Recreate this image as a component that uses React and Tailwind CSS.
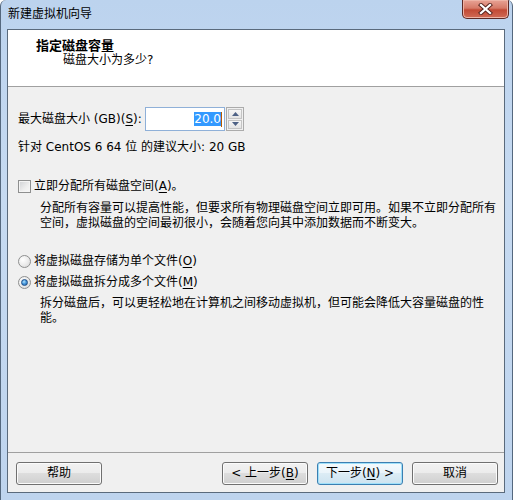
import React from "react";

function U({ children }) {
  return <span className="underline underline-offset-[2px] decoration-[1px]">{children}</span>;
}

function Btn({ children, def }) {
  return (
    <div
      className={
        def
          ? "w-[86px] h-[23px] rounded-[3px] border border-[#3c7fb1] shadow-[inset_0_0_0_1px_#9fe0fa] bg-[linear-gradient(to_bottom,#f4fafd_0%,#eaf4fa_50%,#dcecf5_50%,#cde3f0_100%)] flex items-center justify-center text-[12px] leading-[15px] text-black"
          : "w-[86px] h-[23px] rounded-[3px] border border-[#707070] shadow-[inset_0_0_0_1px_#fbfbfb] bg-[linear-gradient(to_bottom,#f2f2f2_0%,#ebebeb_50%,#dddddd_50%,#cfcfcf_100%)] flex items-center justify-center text-[12px] leading-[15px] text-black"
      }
    >
      {children}
    </div>
  );
}

function SpinBtn({ up }) {
  return (
    <div className="flex-1 border border-[#c4c4c4] bg-[linear-gradient(to_bottom,#f6f6f6,#e4e4e4)] flex items-center justify-center">
      <svg width="7" height="4" viewBox="0 0 7 4">
        {up ? <path d="M0 4 L3.5 0 L7 4 Z" fill="#4d6185" /> : <path d="M0 0 L3.5 4 L7 0 Z" fill="#4d6185" />}
      </svg>
    </div>
  );
}

export default function App() {
  return (
    <div className="w-[513px] h-[500px] overflow-hidden bg-[linear-gradient(to_bottom,#bcd3ee_0%,#c6daf1_40%,#bed4ee_100%)] border-l border-r border-[#55687e] rounded-t-[6px] flex flex-col font-['DejaVu_Sans','Noto_Sans_CJK_SC',sans-serif] text-black">
      <div className="h-[29px] flex items-start justify-between shrink-0">
        <div className="pl-[7px] h-[29px] flex items-center text-[12px] leading-[15px] text-black">新建虚拟机向导</div>
        <div className="mr-[3px] w-[47px] h-[19px] rounded-b-[5px] border border-t-0 border-[#5d2a26] bg-[linear-gradient(to_bottom,#e8a395_0%,#d67a68_45%,#c24a35_55%,#d06b56_100%)] shadow-[inset_0_0_0_1px_#eeb4a6] flex items-center justify-center">
          <svg width="15" height="12" viewBox="0 0 15 12">
            <path d="M3 2 L12 10 M12 2 L3 10" stroke="#5a2620" strokeWidth="4.2" strokeLinecap="square" />
            <path d="M3 2 L12 10 M12 2 L3 10" stroke="#ffffff" strokeWidth="2.3" strokeLinecap="square" />
          </svg>
        </div>
      </div>
      <div className="ml-[6px] w-[498px] h-[464px] border border-[#5a6a7c] bg-[#f0f0f0] flex flex-col shrink-0">
        <div className="h-[57px] bg-white border-b border-[#a0a0a0] pt-[9px] pl-[28px] shrink-0">
          <div className="text-[13px] leading-[14px] font-bold">指定磁盘容量</div>
          <div className="pl-[27px] text-[12px] leading-[15px]">磁盘大小为多少?</div>
        </div>
        <div className="flex-1 pl-[10px] pt-[20px] text-[12px] leading-[15px]">
          <div className="flex items-center h-[24px]">
            <div className="w-[127px]">
              最大磁盘大小 (GB)(<U>S</U>):
            </div>
            <div className="w-[80px] h-[24px] border border-[#8fb0d8] bg-white flex items-center justify-end pr-[2px]">
              <span className="bg-[#3399ff] text-white text-[12px] leading-[14px]">20.0</span>
              <span className="w-[1px] h-[15px] bg-[#b85a00]"></span>
            </div>
            <div className="ml-[1px] w-[18px] h-[24px] border border-[#ababab] bg-[#f0f0f0] p-[1px] flex flex-col gap-[1px]">
              <SpinBtn up />
              <SpinBtn />
            </div>
          </div>
          <div className="mt-[9px]">针对 CentOS 6 64 位 的建议大小: 20 GB</div>
          <div className="mt-[24px] flex items-center">
            <div className="w-[13px] h-[13px] border border-[#8e8f8f] shadow-[inset_0_0_0_1px_#f4f4f4] bg-[linear-gradient(135deg,#cfd1d4_0%,#eeeeee_60%,#f8f8f8_100%)]"></div>
            <div className="ml-[3px]">
              立即分配所有磁盘空间(<U>A</U>)。
            </div>
          </div>
          <div className="mt-[7px] ml-[22px] w-[460px]">
            分配所有容量可以提高性能，但要求所有物理磁盘空间立即可用。如果不立即分配所有空间，虚拟磁盘的空间最初很小，会随着您向其中添加数据而不断变大。
          </div>
          <div className="mt-[23px] flex items-center">
            <div className="w-[13px] h-[13px] rounded-full border border-[#8e8f8f] bg-[radial-gradient(circle_at_35%_35%,#ffffff_0%,#ececec_50%,#d4d4d4_100%)]"></div>
            <div className="ml-[3px]">
              将虚拟磁盘存储为单个文件(<U>O</U>)
            </div>
          </div>
          <div className="mt-[6px] flex items-center">
            <div className="w-[13px] h-[13px] rounded-full border border-[#8e8f8f] bg-[radial-gradient(circle_at_35%_35%,#ffffff_0%,#ececec_50%,#d4d4d4_100%)] flex items-center justify-center">
              <div className="w-[7px] h-[7px] rounded-full border border-[#1f4f88] bg-[radial-gradient(circle_at_40%_35%,#b4e4fb_0%,#4a9ade_45%,#1b5da3_100%)]"></div>
            </div>
            <div className="ml-[3px]">
              将虚拟磁盘拆分成多个文件(<U>M</U>)
            </div>
          </div>
          <div className="mt-[6px] ml-[22px] w-[460px]">
            拆分磁盘后，可以更轻松地在计算机之间移动虚拟机，但可能会降低大容量磁盘的性能。
          </div>
        </div>
        <div className="h-[40px] border-t border-[#a0a0a0] pt-[9px] pl-[8px] pr-[6px] flex items-start shrink-0">
          <Btn>帮助</Btn>
          <div className="flex-1"></div>
          <Btn>
            &lt; 上一步(<U>B</U>)
          </Btn>
          <div className="w-[9px]"></div>
          <Btn def>
            下一步(<U>N</U>) &gt;
          </Btn>
          <div className="w-[9px]"></div>
          <Btn>取消</Btn>
        </div>
      </div>
    </div>
  );
}
